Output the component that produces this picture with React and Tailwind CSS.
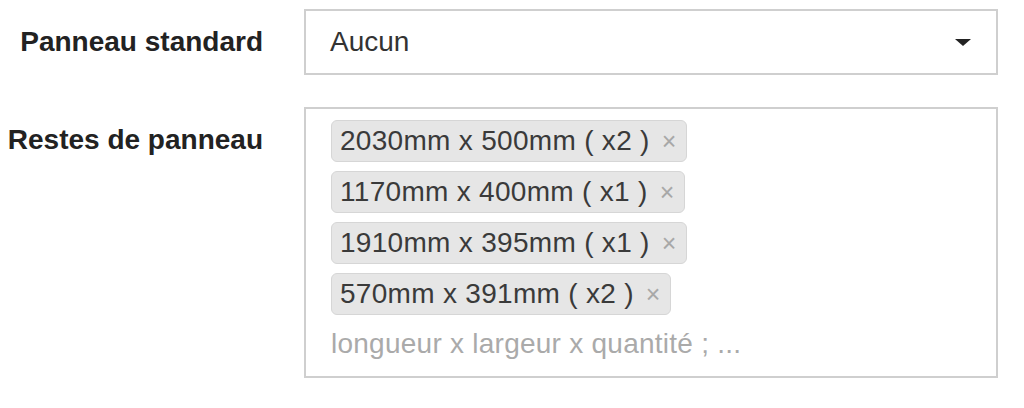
const remnants = [
  "2030mm x 500mm ( x2 )",
  "1170mm x 400mm ( x1 )",
  "1910mm x 395mm ( x1 )",
  "570mm x 391mm ( x2 )",
];

function Tag({ label }) {
  return (
    <div className="flex items-center h-[42px] pl-2 pr-[10px] rounded-md border-[1.5px] border-[#d6d6d6] bg-[#e6e6e6] text-[#3a3a3a] leading-[40px]">
      <span className="tracking-[0.3px]">{label}</span>
      <span className="ml-3 text-[25px] text-[#a8a8a8]">×</span>
    </div>
  );
}

export default function App() {
  return (
    <div
      className="w-[1024px] h-[408px] bg-white text-[28px]"
      style={{ fontFamily: '"Liberation Sans", Arial, sans-serif' }}
    >
      <div className="pt-[9px] grid grid-cols-[263px_694px] gap-x-[41px] gap-y-[32px]">
        {/* Panneau standard */}
        <div className="flex items-center justify-end font-bold text-[#222]">
          Panneau standard
        </div>
        <div className="h-[66px] flex items-center justify-between border-2 border-[#cfcfcf] pl-6 pr-6 text-[#333]">
          <span>Aucun</span>
          <svg width="16" height="7" viewBox="0 0 16 7" className="mr-[1px]">
            <path d="M0 0 L16 0 L8 7 Z" fill="#222" />
          </svg>
        </div>

        {/* Restes de panneau */}
        <div className="text-right font-bold text-[#222] leading-7 pt-[19px]">
          Restes de panneau
        </div>
        <div className="h-[271px] border-2 border-[#cfcfcf] pl-[25px] pt-[11px] flex flex-col items-start gap-[9px]">
          {remnants.map((r) => (
            <Tag key={r} label={r} />
          ))}
          <div className="leading-[40px] text-[#aaa] tracking-[0.25px]">
            longueur x largeur x quantité ; ...
          </div>
        </div>
      </div>
    </div>
  );
}
